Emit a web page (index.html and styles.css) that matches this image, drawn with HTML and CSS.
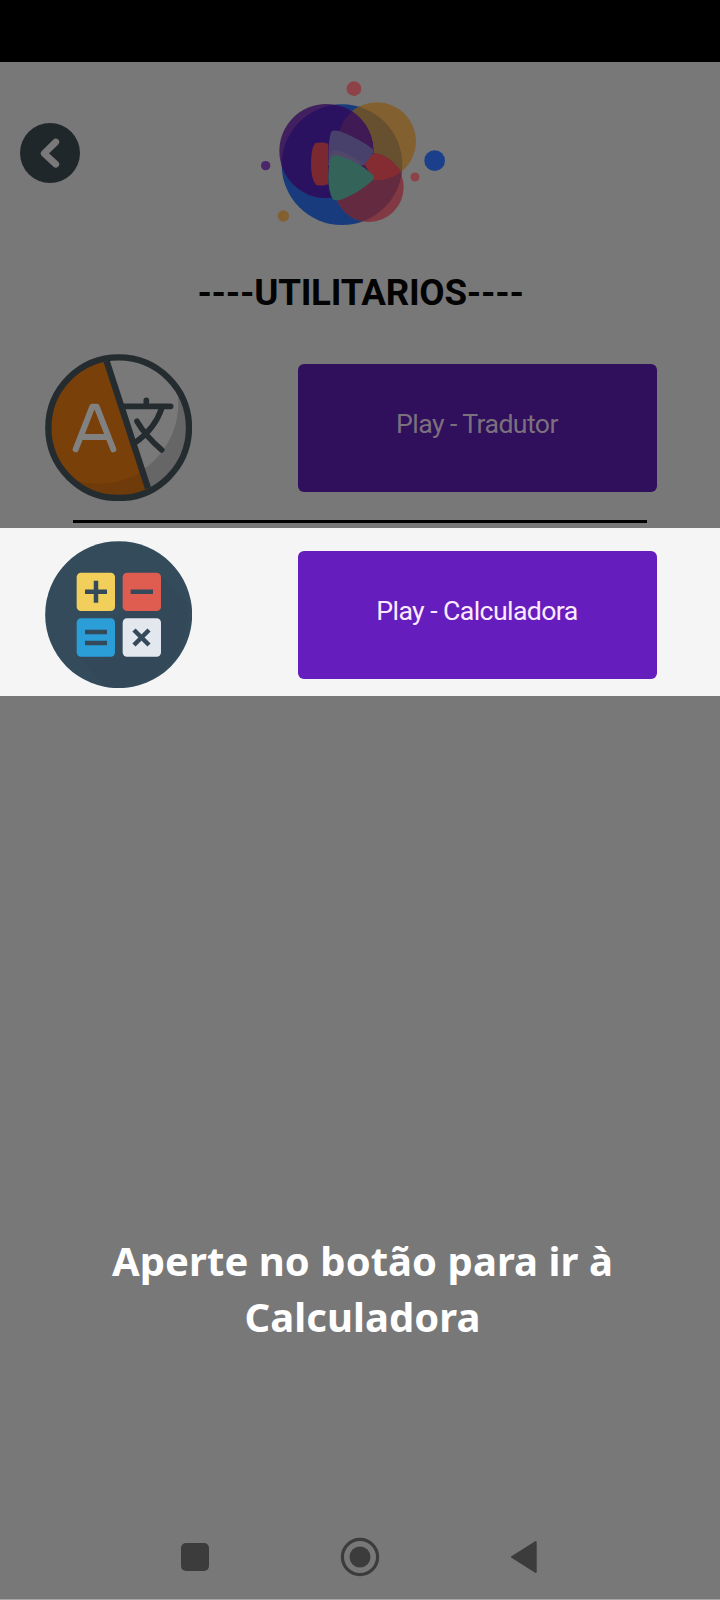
FILE: index.html
```html
<!DOCTYPE html>
<html lang="pt-BR">
<head>
<meta charset="utf-8">
<title>Utilitarios</title>
<link rel="stylesheet" href="styles.css">
</head>
<body>
<div class="screen">
  <div class="status-bar"></div>
  <header class="header">
    <svg class="back" viewBox="0 0 60 60" role="img" aria-label="Voltar">
      <circle cx="30" cy="30" r="30" fill="#20272b"/>
      <path d="M35.800 19 24.200 30.400 35.800 41.200" fill="none" stroke="#797979" stroke-width="6.800" stroke-linecap="round" stroke-linejoin="round"/>
    </svg>
    <svg class="logo" viewBox="60 90 560 440" aria-hidden="true">
      <defs>
        <clipPath id="blue"><circle cx="306" cy="344" r="181"/></clipPath>
        <clipPath id="purple"><circle cx="259" cy="303" r="141"/></clipPath>
        <clipPath id="pink"><circle cx="387" cy="412" r="104"/></clipPath>
      </defs>
      <circle cx="342" cy="116" r="22" fill="#8d4248"/>
      <circle cx="584" cy="332" r="31" fill="#1b3f8a"/>
      <circle cx="525" cy="381" r="13.5" fill="#8d4248"/>
      <circle cx="77" cy="347" r="14" fill="#4a2769"/>
      <circle cx="130" cy="498" r="17" fill="#83602f"/>
      <circle cx="306" cy="344" r="181" fill="#183b7d"/>
      <circle cx="411" cy="274" r="117" fill="#83602f"/>
      <circle cx="411" cy="274" r="117" fill="#67502f" clip-path="url(#blue)"/>
      <circle cx="387" cy="412" r="104" fill="#813a43"/>
      <circle cx="387" cy="412" r="104" fill="#642a40" clip-path="url(#blue)"/>
      <g clip-path="url(#pink)"><circle cx="411" cy="274" r="117" fill="#842c31"/></g>
      <circle cx="259" cy="303" r="141" fill="#42205f"/>
      <circle cx="259" cy="303" r="141" fill="#2b1261" clip-path="url(#blue)"/>
      <g clip-path="url(#purple)"><circle cx="411" cy="274" r="117" fill="#401a55"/></g>
      <path d="M225 280Q245 275 265 281V403Q245 409 229 405Q213 390 213 343Q213 296 225 280Z" fill="#7b2930"/>
      <path d="M398 311Q442 315 484 362Q448 391 404 390L372 342Z" fill="#842c31"/>
      <path d="M266 340Q264 265 275 244Q283 239 300 244Q355 265 397 296Q404 303 397 313L372 346H265Z" fill="#48416c"/>
      <path d="M265 345Q266 308 281 300Q325 303 372 346Z" fill="#504769"/>
      <path d="M275 319Q285 313 302 319Q355 335 398 374Q406 382 398 391Q350 434 303 449Q286 454 278 447Q265 425 265 383Q265 337 275 319Z" fill="#34635a"/>
    </svg>
  </header>
  <h1 class="title">----UTILITARIOS----</h1>
  <section class="item item-dim">
    <svg class="item-icon" viewBox="45 42 442 442" aria-hidden="true">
      <defs><clipPath id="disc"><circle cx="266" cy="263" r="207"/></clipPath></defs>
      <g clip-path="url(#disc)">
        <rect x="45" y="42" width="442" height="442" fill="#666"/>
        <circle cx="205" cy="190" r="240" fill="#797979"/>
        <path d="M223 42 361 484H45V42Z" fill="#79400a"/>
        <path d="M62 390Q200 470 338 395L361 484H45Z" fill="#703b0a"/>
      </g>
      <g fill="none" stroke="#252c30" stroke-width="17" stroke-linecap="round" stroke-linejoin="round">
        <circle cx="266" cy="263" r="211" stroke-width="19"/>
        <path d="M230 64 354 445" stroke-linecap="butt" stroke-width="19"/>
        <path d="M279 199H422M349 181V198M395 205Q375 265 317 307M321 244Q345 286 395 330"/>
      </g>
      <path d="M137 328 187 200H200L250 328M156 291H233" fill="none" stroke="#818181" stroke-width="18" stroke-linecap="round" stroke-linejoin="round"/>
    </svg>
    <button class="button">Play - Tradutor</button>
  </section>
  <div class="divider"></div>
  <section class="item item-active">
    <svg class="item-icon" viewBox="45 63 442 442" aria-hidden="true">
      <circle cx="266" cy="284" r="220.5" fill="#344b5b"/>
      <path d="M388 164 470 246A220 220 0 0 1 228 501L144 408Z" fill="#334959"/>
      <rect x="140" y="158" width="115" height="115" rx="13" fill="#f2cf5b"/>
      <rect x="278" y="158" width="115" height="115" rx="13" fill="#df5d50"/>
      <rect x="140" y="295" width="115" height="115" rx="13" fill="#2b9dd7"/>
      <rect x="278" y="295" width="115" height="115" rx="13" fill="#e3e8ef"/>
      <path d="M165 215H231M198 182V248M302 215H369M165 336H231M165 369H231M312 330 357 375M357 330 312 375" fill="none" stroke="#34495a" stroke-width="13.5"/>
    </svg>
    <button class="button">Play - Calculadora</button>
  </section>
  <p class="hint">Aperte no botão para ir à Calculadora</p>
  <nav class="nav-bar">
    <svg viewBox="0 0 40 40"><rect x="6" y="6" width="28" height="28" rx="5" fill="#3c3c3c"/></svg>
    <svg viewBox="0 0 40 40"><circle cx="20" cy="20" r="17.6" fill="none" stroke="#3c3c3c" stroke-width="3.2"/><circle cx="20" cy="20" r="10.5" fill="#3c3c3c"/></svg>
    <svg viewBox="0 0 40 40"><path d="M7 20 30.700 5V35Z" fill="#3c3c3c" stroke="#3c3c3c" stroke-width="2" stroke-linejoin="round"/></svg>
  </nav>
</div>
</body>
</html>
```
FILE: styles.css
```css
* { box-sizing: border-box; }
body { margin: 0; }
.screen {
  width: 720px;
  height: 1600px;
  display: flex;
  flex-direction: column;
  background: #787878;
  border-bottom: 1px solid #aaa5a7;
  overflow: hidden;
}
.status-bar { height: 62px; background: #000; flex: none; }
.header {
  height: 182px;
  flex: none;
  display: flex;
  align-items: flex-start;
  padding: 18px 0 0 20px;
}
.back { width: 60px; height: 60px; margin-top: 43px; }
.logo { width: 186.67px; height: 146.67px; margin-left: 180px; }
.title {
  margin: 0;
  padding-left: 1px;
  height: 98px;
  flex: none;
  text-align: center;
  font: 700 36.7px/98px Roboto, sans-serif;
  letter-spacing: -0.25px;
  color: #030303;
}
.item {
  flex: none;
  display: flex;
  align-items: flex-start;
  padding-left: 45px;
}
.item-dim { height: 178px; padding-top: 12px; }
.item-active { height: 168px; margin-top: 4px; padding-top: 13px; background: #f5f5f5; }
.item-icon { width: 147.33px; height: 147.33px; flex: none; }
.button {
  width: 359px;
  height: 128px;
  margin: 10px 0 0 105.67px;
  padding: 0 1px 7px 0;
  border: 0;
  border-radius: 6px;
  background: #651dbd;
  color: #fbeaff;
  font: 400 26.7px/1.2 Roboto, sans-serif;
  letter-spacing: -0.6px;
}
.item-dim .button { background: #300f5c; color: #7b717d; }
.divider { flex: none; width: 574px; height: 4px; margin-left: 73px; border-top: 3px solid #000; }
.hint {
  margin: 537px 0 0;
  padding: 0 80px 0 85px;
  text-align: center;
  font: 700 40px/56px "Noto Sans", sans-serif;
  letter-spacing: 0.05px;
  color: #fff;
}
.nav-bar {
  display: flex;
  justify-content: space-between;
  width: 370px;
  margin: auto 0 22px 175px;
}
.nav-bar svg { width: 40px; height: 40px; }
```
